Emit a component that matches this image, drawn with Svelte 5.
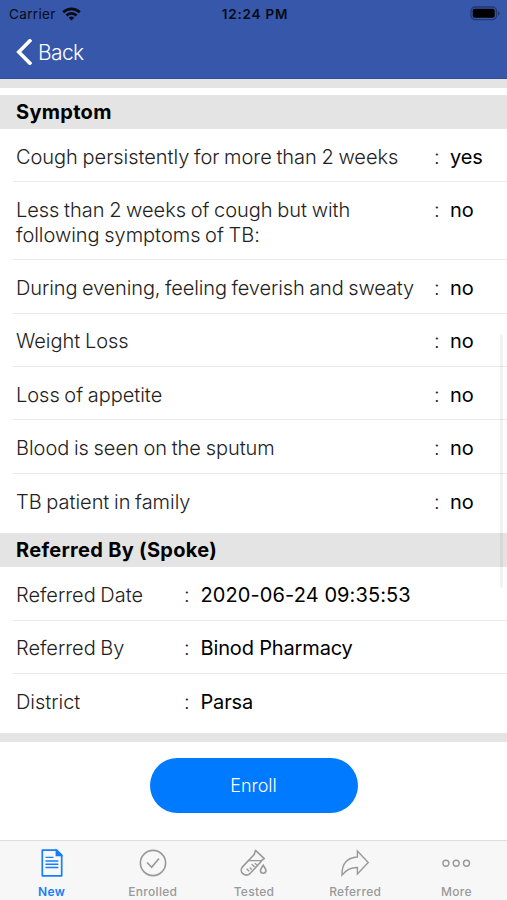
<script lang="ts">
	interface Row {
		label: string;
		value: string;
	}

	interface Tab {
		label: string;
		icon: 'document' | 'check' | 'tube' | 'share' | 'more';
	}

	const symptoms: Row[] = [
		{ label: 'Cough persistently for more than 2 weeks', value: 'yes' },
		{ label: 'Less than 2 weeks of cough but with following symptoms of TB:', value: 'no' },
		{ label: 'During evening, feeling feverish and sweaty', value: 'no' },
		{ label: 'Weight Loss', value: 'no' },
		{ label: 'Loss of appetite', value: 'no' },
		{ label: 'Blood is seen on the sputum', value: 'no' },
		{ label: 'TB patient in family', value: 'no' }
	];

	const referral: Row[] = [
		{ label: 'Referred Date', value: '2020-06-24 09:35:53' },
		{ label: 'Referred By', value: 'Binod Pharmacy' },
		{ label: 'District', value: 'Parsa' }
	];

	const tabs: Tab[] = [
		{ label: 'New', icon: 'document' },
		{ label: 'Enrolled', icon: 'check' },
		{ label: 'Tested', icon: 'tube' },
		{ label: 'Referred', icon: 'share' },
		{ label: 'More', icon: 'more' }
	];

	let activeTab = $state('New');
</script>

{#snippet rows(items: Row[])}
	{#each items as item}
		<div class="row">
			<span class="label">{item.label}</span>
			<span class="colon">:</span>
			<span class="value">{item.value}</span>
		</div>
	{/each}
{/snippet}

<div class="screen">
	<header>
		<div class="status">
			<div class="carrier">
				<span>Carrier</span>
				<svg width="19" height="14" viewBox="0 0 19 14">
					<g fill="none" stroke="#070b16" stroke-width="2.7">
						<path d="M1.2 5.2a11.8 11.8 0 0 1 16.6 0" />
						<path d="M4.4 8.5a7.2 7.2 0 0 1 10.2 0" />
					</g>
					<path d="M6.7 10.8a4 4 0 0 1 5.6 0L9.5 13.6z" fill="#070b16" />
				</svg>
			</div>
			<span class="time">12:24 PM</span>
			<svg class="battery" width="31" height="15" viewBox="0 0 31 15">
				<rect x="1" y="1" width="25.5" height="12.6" rx="4" fill="none" stroke="#24396f" stroke-width="1.3" />
				<rect x="2.7" y="2.8" width="22" height="9" rx="2" fill="#000" />
				<path d="M28 5.2c2 .7 2 3.6 0 4.3z" fill="#24396f" />
			</svg>
		</div>
		<button class="back">
			<svg width="16" height="26" viewBox="0 0 16 26">
				<path d="M13.8 1.8 2.8 13l11 11.2" fill="none" stroke="#fff" stroke-width="3.6" stroke-linecap="square" stroke-linejoin="miter" />
			</svg>
			<span>Back</span>
		</button>
	</header>

	<main>
		<div class="strip"></div>
		<section class="symptoms">
			<h2>Symptom</h2>
			{@render rows(symptoms)}
		</section>
		<section class="referral">
			<h2>Referred By (Spoke)</h2>
			{@render rows(referral)}
		</section>
		<div class="strip"></div>
		<button class="enroll">Enroll</button>
		<div class="scrollbar"></div>
	</main>

	<nav>
		{#each tabs as tab}
			<button class="tab" class:active={tab.label === activeTab} onclick={() => (activeTab = tab.label)}>
				<svg width="32" height="32" viewBox="0 0 32 32">
					{#if tab.icon === 'document'}
						<path d="M6.3 3.2h14.4l5 5v20.6H6.3z" stroke-width="1.7" stroke-linejoin="round" />
						<path d="M20.3 3.2v5.3h5.4z" fill="currentColor" />
						<path d="M9.5 10.4h8M9.5 14h12.8M9.5 17.3h12.8M9.5 20.5h12.8" />
					{:else if tab.icon === 'check'}
						<circle cx="16" cy="16" r="12.6" stroke-width="1.6" />
						<path d="m10.1 15.5 4.6 4.8 7.3-8.8" stroke-width="1.7" />
					{:else if tab.icon === 'tube'}
						<path d="M17.5 3.4 26.3 11.6 24 13.2 21.8 16 12.2 26.3c-5.1 4.8-12-1.7-7.5-6.7L16.2 7.5z" stroke-width="1.6" stroke-linejoin="round" />
						<path d="M10.4 13.6h12.7M8.6 21.7l2.6 2.5M11.8 20.6l1.9 1.9M13.7 17.2l2.9 2.8M16.9 16.2l1.9 1.9" />
						<path d="M25.2 18.3c-1.6 2.5-2.7 3.7-2.7 5.2a2.7 2.7 0 0 0 5.4 0c0-1.5-1.1-2.7-2.7-5.2z" stroke-width="1.6" />
					{:else if tab.icon === 'share'}
						<path d="M18.4 4 29.2 15.4 18.4 27v-6.5c-6.3-.1-11.1 2-15.4 7.7C2.7 17.3 7.2 10.7 18.4 10z" />
					{:else}
						<circle cx="5.9" cy="16.3" r="3" />
						<circle cx="16.2" cy="16.3" r="3" />
						<circle cx="26.5" cy="16.3" r="3" />
					{/if}
				</svg>
				<span>{tab.label}</span>
			</button>
		{/each}
	</nav>
</div>

<style>
	:global(body) {
		margin: 0;
		background: #fff;
	}

	.screen {
		width: 507px;
		height: 900px;
		display: flex;
		flex-direction: column;
		overflow: hidden;
		background: #fff;
		font-family: Inter, 'Liberation Sans', sans-serif;
	}

	button {
		padding: 0;
		border: 0;
		background: none;
		font-family: inherit;
		cursor: pointer;
	}

	svg {
		display: block;
		flex-shrink: 0;
	}

	/* Header */
	header {
		box-sizing: border-box;
		height: 79px;
		flex-shrink: 0;
		background: #3757aa;
		border-bottom: 1px solid #304d9c;
	}

	.status {
		height: 27px;
		display: grid;
		grid-template-columns: 1fr auto 1fr;
		align-items: center;
		padding: 0 6px 0 9px;
		color: #070b16;
		font-size: 13.5px;
	}

	.carrier {
		display: flex;
		align-items: center;
		gap: 6px;
		letter-spacing: 0.35px;
	}

	.time {
		font-weight: 600;
		letter-spacing: 0.8px;
	}

	.battery {
		justify-self: end;
	}

	.back {
		display: flex;
		align-items: center;
		gap: 6px;
		height: 50px;
		padding-left: 16px;
		color: #fff;
		font-size: 21px;
		font-weight: 300;
		letter-spacing: -0.6px;
	}

	/* Details */
	main {
		position: relative;
		flex: 1;
		min-height: 0;
		display: flex;
		flex-direction: column;
	}

	.strip {
		height: 9px;
		flex-shrink: 0;
		background: #e4e4e4;
	}

	.symptoms {
		margin-top: 7px;
	}

	h2 {
		margin: 0;
		padding-left: 16px;
		height: 34px;
		line-height: 34px;
		background: #e4e4e4;
		color: #000;
		font-size: 20px;
		font-weight: 700;
		letter-spacing: 0.3px;
	}

	.row {
		display: grid;
		grid-template-columns: 418px 16px 1fr;
		margin-left: 13px;
		padding: 15.8px 0 12.1px 3px;
		border-bottom: 1px solid #e9e9e9;
		font-size: 20px;
		line-height: 24.5px;
	}

	.row:last-child {
		padding-bottom: 19px;
		border-bottom: 0;
	}

	.referral .row {
		grid-template-columns: 168px 16.5px 1fr;
	}

	.label,
	.colon {
		color: #222;
		font-weight: 300;
	}

	.label {
		letter-spacing: -0.03px;
		word-spacing: -0.9px;
	}

	.symptoms .label {
		max-width: 405px;
	}

	.symptoms .row:nth-of-type(3) .label {
		letter-spacing: -0.12px;
	}

	.value {
		color: #000;
		letter-spacing: -0.15px;
	}

	.referral .row:nth-of-type(1) .value {
		letter-spacing: 0.1px;
	}

	.enroll {
		align-self: center;
		width: 208px;
		height: 55px;
		margin-top: 16px;
		border-radius: 28px;
		background: #007aff;
		color: #fff;
		font-size: 18px;
		font-weight: 300;
	}

	.scrollbar {
		position: absolute;
		top: 255px;
		right: 4px;
		width: 3px;
		height: 254px;
		border-radius: 2px;
		background: rgba(0, 0, 0, 0.05);
	}

	/* Tab bar */
	nav {
		box-sizing: border-box;
		height: 60px;
		flex-shrink: 0;
		display: grid;
		grid-template-columns: repeat(5, 1fr);
		padding-left: 1px;
		border-top: 1px solid #dcdcdc;
		background: #f7f7f8;
	}

	.tab {
		display: flex;
		flex-direction: column;
		align-items: center;
		padding-top: 6px;
		color: #999;
		font-size: 12px;
		font-weight: 500;
		line-height: 15px;
		letter-spacing: 0.3px;
	}

	.tab span {
		margin-top: 5px;
	}

	.tab svg {
		fill: none;
		stroke: currentColor;
		stroke-width: 1.4;
	}

	.active {
		color: #167efb;
		font-weight: 600;
	}
</style>
